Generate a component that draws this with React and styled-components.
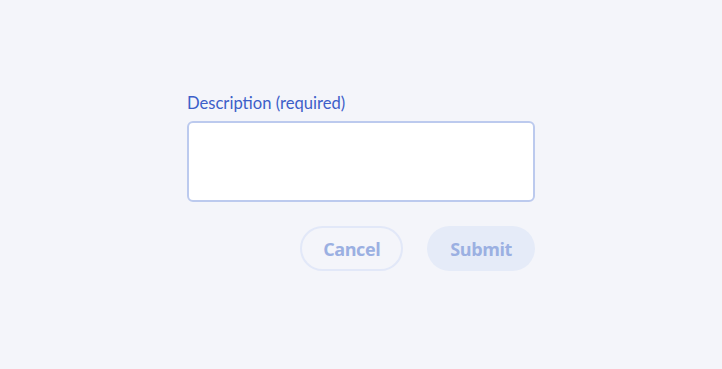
import React from "react";
import styled, { createGlobalStyle } from "styled-components";

const Global = createGlobalStyle`
  html, body { margin: 0; padding: 0; background: #f4f5fa; }
  body { font-family: "Open Sans", "Noto Sans", sans-serif; }
`;

const Page = styled.div`
  box-sizing: border-box;
  width: 722px;
  height: 369px;
  padding-bottom: 5px;
  display: flex;
  align-items: center;
  justify-content: center;
`;

const Form = styled.form`
  width: 348px;
  display: flex;
  flex-direction: column;
`;

const Label = styled.label`
  font-family: Lato, "Open Sans", sans-serif;
  font-size: 16.6px;
  line-height: 20px;
  color: #3d5fc9;
  margin-bottom: 8px;
`;

const TextArea = styled.textarea`
  box-sizing: border-box;
  width: 348px;
  height: 81px;
  border: 2px solid #bccaee;
  border-radius: 6px;
  background: #fff;
  resize: none;
  outline: none;
  font-family: inherit;
`;

const Actions = styled.div`
  display: flex;
  justify-content: flex-end;
  gap: 24px;
  margin-top: 24px;
`;

const Button = styled.button`
  box-sizing: border-box;
  height: 45px;
  padding: 0 21px;
  border-radius: 23px;
  border: 2.5px solid ${(p) => (p.$primary ? "transparent" : "#e2e8f8")};
  background: ${(p) => (p.$primary ? "#e5ebf8" : "transparent")};
  color: #9bb0e2;
  font-family: "Open Sans", sans-serif;
  font-weight: 700;
  font-size: 18px;
  letter-spacing: -0.4px;
  cursor: default;
`;

export default function App() {
  return (
    <>
      <Global />
      <Page>
        <Form onSubmit={(e) => e.preventDefault()}>
          <Label htmlFor="desc">Description (required)</Label>
          <TextArea id="desc" />
          <Actions>
            <Button type="button" disabled>Cancel</Button>
            <Button type="submit" $primary disabled>Submit</Button>
          </Actions>
        </Form>
      </Page>
    </>
  );
}
